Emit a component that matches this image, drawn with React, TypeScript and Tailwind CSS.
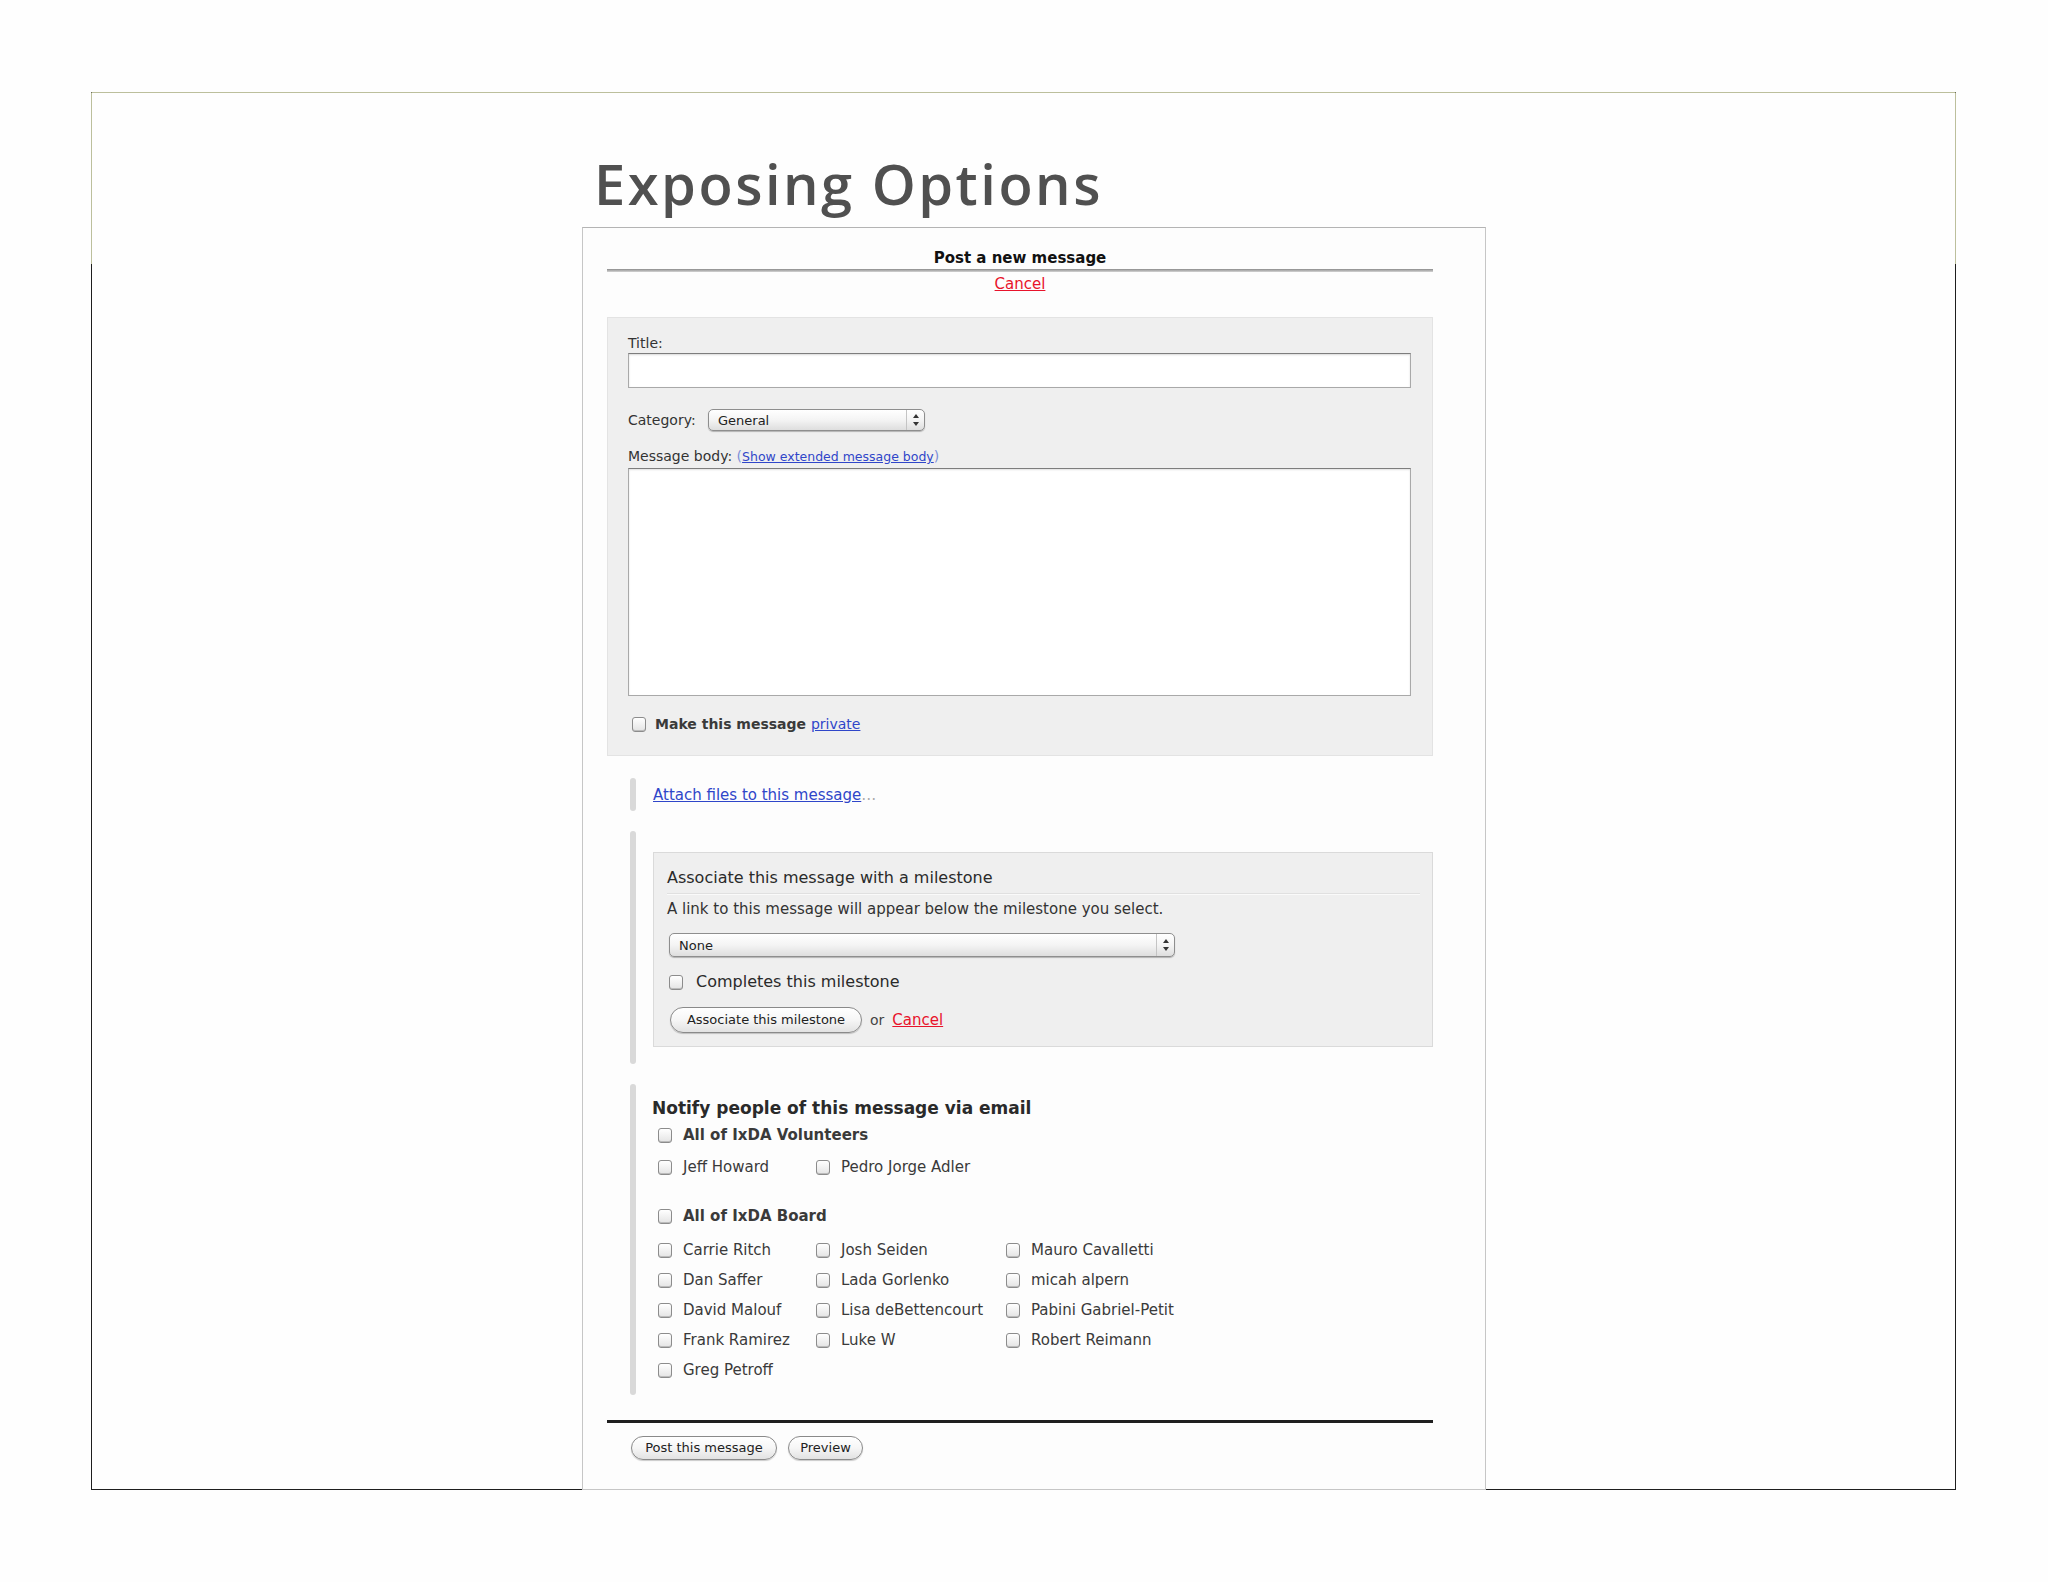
import React from "react"

const body = { fontFamily: '"DejaVu Sans", "Liberation Sans", sans-serif' }

function Checkbox() {
  return (
    <span className="inline-block w-[14px] h-[15px] rounded-[3px] border border-[#8c8c8c] bg-gradient-to-b from-white to-[#e4e4e4] shadow-[inset_0_-1px_0_#bbb] shrink-0" />
  )
}

function Arrows() {
  return (
    <svg width="8" height="14" viewBox="0 0 8 14" className="shrink-0">
      <path d="M4 1 L7 5 L1 5 Z" fill="#333" />
      <path d="M4 13 L7 9 L1 9 Z" fill="#333" />
    </svg>
  )
}

function Popup({ label, className }: { label: string; className: string }) {
  return (
    <div
      className={`flex items-center rounded-[5px] border border-[#8e8e8e] bg-gradient-to-b from-white via-[#f4f4f4] to-[#dedede] shadow-[0_1px_1px_rgba(0,0,0,0.25)] ${className}`}
    >
      <span className="flex-1 pl-[9px] text-[13px] leading-none text-[#222]">{label}</span>
      <span className="flex items-center justify-center w-[18px] h-full border-l border-[#c4c4c4]">
        <Arrows />
      </span>
    </div>
  )
}

function Pill({ label, className }: { label: string; className: string }) {
  return (
    <span
      className={`inline-flex items-center justify-center rounded-full border border-[#8a8a8a] bg-gradient-to-b from-white via-[#f6f6f6] to-[#e2e2e2] shadow-[0_1px_1px_rgba(0,0,0,0.2)] text-[13px] text-[#222] ${className}`}
    >
      {label}
    </span>
  )
}

function Bar() {
  return <div className="w-[6px] shrink-0 rounded-[3px] bg-[#d9d9d9]" />
}

function Person({ name, bold }: { name: string; bold?: boolean }) {
  return (
    <div className="flex items-center gap-[11px] h-[20px]">
      <Checkbox />
      <span className={`text-[15px] leading-[20px] text-[#3a3a3a] whitespace-nowrap ${bold ? "font-bold" : ""}`}>
        {name}
      </span>
    </div>
  )
}

const board = [
  ["Carrie Ritch", "Josh Seiden", "Mauro Cavalletti"],
  ["Dan Saffer", "Lada Gorlenko", "micah alpern"],
  ["David Malouf", "Lisa deBettencourt", "Pabini Gabriel-Petit"],
  ["Frank Ramirez", "Luke W", "Robert Reimann"],
  ["Greg Petroff", "", ""],
]

export default function App() {
  return (
    <div className="w-[2048px] h-[1582px] bg-[#fefefe] pt-[92px] pl-[91px]">
      <div className="relative w-[1865px] h-[1398px] border-t border-t-[#bcbf9c] border-x border-b border-x-[#1e1e1e] border-b-[#1e1e1e]">
        <div className="absolute left-[-1px] top-0 w-px h-[171px] bg-[#bcbf9c]" />
        <div className="absolute right-[-1px] top-0 w-px h-[171px] bg-[#bcbf9c]" />

        <h1
          className="ml-[502px] mt-[62px] text-[56px] leading-none font-semibold tracking-[2.5px] text-[#505050]"
          style={{ fontFamily: '"Open Sans", "Lato", sans-serif' }}
        >
          Exposing Options
        </h1>

        <div
          className="relative ml-[490px] mt-[16px] w-[904px] h-[1263px] border border-[#c6c6c6] border-t-[#b4b4b4] bg-[#fdfdfd] pl-[24px] pr-[52px] text-[#333]"
          style={body}
        >
          <div className="pt-[20px] text-center text-[15px] leading-[20px] font-bold text-[#111]">Post a new message</div>
          <div className="mt-[1px] h-[3px] bg-gradient-to-b from-[#8c8c8c] to-[#d4d4d4]" />
          <div className="mt-[3px] text-center text-[15px] leading-[18px]">
            <span className="text-[#e8132b] underline">Cancel</span>
          </div>

          {/* main form box */}
          <div className="mt-[24px] h-[439px] border border-[#e3e3e3] bg-[#efefef] pl-[20px] pr-[21px] pt-[15px]">
            <div className="text-[14px] leading-[20px] text-[#333]">Title:</div>
            <div className="h-[35px] border border-[#a9a9a9] border-t-[#7d7d7d] bg-white shadow-[inset_0_1px_2px_rgba(0,0,0,0.15)]" />

            <div className="mt-[21px] flex items-center h-[22px]">
              <span className="w-[80px] text-[14px] text-[#333]">Category:</span>
              <Popup label="General" className="w-[217px] h-[22px]" />
            </div>

            <div className="mt-[15px] text-[14px] leading-[20px] whitespace-nowrap">
              <span className="text-[#333]">Message body: </span>
              <span className="text-[#7d8fd8]">(</span>
              <span className="text-[12.5px] text-[#2f46c9] underline">Show extended message body</span>
              <span className="text-[#7d8fd8]">)</span>
            </div>
            <div className="mt-px h-[228px] border border-[#a9a9a9] border-t-[#7d7d7d] bg-white shadow-[inset_0_1px_2px_rgba(0,0,0,0.12)]" />

            <div className="mt-[18px] flex items-center gap-[9px] h-[20px] pl-[4px]">
              <Checkbox />
              <span className="text-[14px] font-bold text-[#3a3a3a]">
                Make this message <span className="font-normal text-[#2f46c9] underline">private</span>
              </span>
            </div>
          </div>

          {/* attach files */}
          <div className="mt-[22px] flex h-[33px] pl-[23px]">
            <Bar />
            <div className="ml-[17px] flex items-center pt-[2px] text-[15px]">
              <span className="text-[#2f46c9] underline">Attach files to this message</span>
              <span className="text-[#aaa]">…</span>
            </div>
          </div>

          {/* milestone */}
          <div className="mt-[20px] flex pl-[23px]">
            <Bar />
            <div className="ml-[17px] mt-[21px] mb-[17px] flex-1 h-[195px] border border-[#dadada] bg-[#efefef] pl-[13px] pr-[12px] pt-[15px]">
              <div className="text-[16px] leading-[20px] text-[#2a2a2a]">Associate this message with a milestone</div>
              <div className="mt-[5px] h-px bg-[#e0e0e0] shadow-[0_1px_0_#fafafa]" />
              <div className="mt-[5px] text-[15px] leading-[20px] text-[#333] whitespace-nowrap">
                A link to this message will appear below the milestone you select.
              </div>
              <Popup label="None" className="mt-[14px] ml-[2px] w-[506px] h-[24px]" />
              <div className="mt-[15px] ml-[2px] flex items-center gap-[13px] h-[20px]">
                <Checkbox />
                <span className="text-[16px] text-[#2a2a2a]">Completes this milestone</span>
              </div>
              <div className="mt-[15px] ml-[3px] flex items-center h-[26px] text-[14px]">
                <Pill label="Associate this milestone" className="w-[192px] h-[26px]" />
                <span className="ml-[8px] text-[#444]">or</span>
                <span className="ml-[8px] text-[15px] text-[#e8132b] underline">Cancel</span>
              </div>
            </div>
          </div>

          {/* notify */}
          <div className="mt-[20px] flex pl-[23px]">
            <Bar />
            <div className="ml-[16px] pt-[12px] pb-[15px]">
              <div className="text-[17px] leading-[24px] font-bold text-[#2a2a2a]">
                Notify people of this message via email
              </div>
              <div className="pl-[6px]">
                <div className="mt-[5px]">
                  <Person name="All of IxDA Volunteers" bold />
                </div>
                <div className="mt-[12px] grid grid-cols-[158px_190px_auto]">
                  <Person name="Jeff Howard" />
                  <Person name="Pedro Jorge Adler" />
                </div>
                <div className="mt-[29px]">
                  <Person name="All of IxDA Board" bold />
                </div>
                <div className="mt-[14px] grid grid-cols-[158px_190px_auto] gap-y-[10px]">
                  {board.flat().map((n, i) =>
                    n ? <Person key={i} name={n} /> : <div key={i} />
                  )}
                </div>
              </div>
            </div>
          </div>

          <div className="mt-[25px] h-[3px] bg-[#1f1f1f]" />

          <div className="mt-[13px] ml-[24px] flex gap-[11px]">
            <Pill label="Post this message" className="w-[146px] h-[24px]" />
            <Pill label="Preview" className="w-[75px] h-[24px]" />
          </div>
        </div>
      </div>
    </div>
  )
}
